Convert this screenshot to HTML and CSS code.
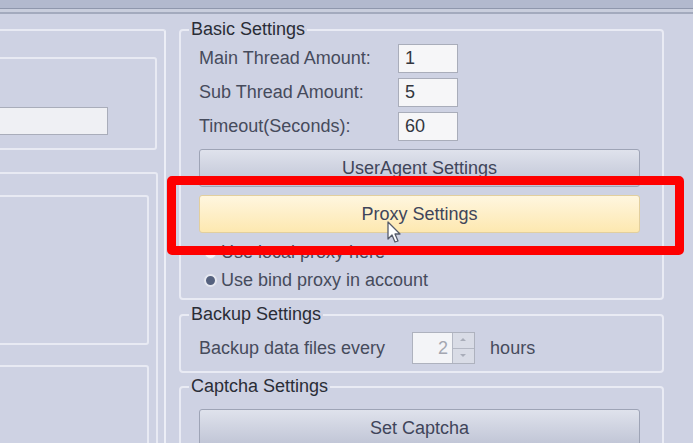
FILE: index.html
```html
<!DOCTYPE html>
<html lang="en">
<head>
    <meta charset="UTF-8">
    <title>Settings</title>
    <link rel="stylesheet" href="styles.css">
</head>
<body>
    <div class="titlebar"></div>
    <div class="titlebar-rule"></div>

    <div class="main">
        <div class="left-col">
            <div class="panel outer">
                <div class="panel box-a">
                    <div class="text-field"></div>
                </div>
                <div class="panel box-b">
                    <div class="panel box-c"></div>
                    <div class="panel box-d"></div>
                </div>
            </div>
        </div>

        <div class="right-col">
            <fieldset class="group basic">
                <legend>Basic Settings</legend>
                <div class="row">
                    <label for="main_thread">Main Thread Amount:</label>
                    <input type="text" id="main_thread" value="1">
                </div>
                <div class="row">
                    <label for="sub_thread">Sub Thread Amount:</label>
                    <input type="text" id="sub_thread" value="5">
                </div>
                <div class="row">
                    <label for="timeout">Timeout(Seconds):</label>
                    <input type="text" id="timeout" value="60">
                </div>
                <button class="btn ua-btn">UserAgent Settings</button>
                <button class="btn btn-hot">Proxy Settings</button>
                <div class="radio"><span class="dot"></span>Use local proxy here</div>
                <div class="radio checked"><span class="dot"></span>Use bind proxy in account</div>
            </fieldset>

            <fieldset class="group backup">
                <legend>Backup Settings</legend>
                <div class="backup-row">
                    <span>Backup data files every</span>
                    <div class="spinner">
                        <div class="spin-value">2</div>
                        <div class="spin-arrows">
                            <div class="spin-up"></div>
                            <div class="spin-down"></div>
                        </div>
                    </div>
                    <span>hours</span>
                </div>
            </fieldset>

            <fieldset class="group captcha">
                <legend>Captcha Settings</legend>
                <button class="btn">Set Captcha</button>
            </fieldset>
        </div>
    </div>

    <div class="highlight"></div>
    <svg class="cursor" width="16" height="24" viewBox="0 0 16 24">
        <path d="M1 1 L1 18 L5 14 L8 21 L11 20 L8 13 L13 13 Z" fill="#fff" stroke="#555b6a" stroke-width="1.3" stroke-linejoin="round"/>
    </svg>
</body>
</html>
```

FILE: styles.css
```css
body {
    margin: 0;
    height: 443px;
    overflow: hidden;
    background-color: #ced2e3;
    font-family: "Liberation Sans", Arial, sans-serif;
    font-size: 18px;
    color: #464b5c;
}

.titlebar {
    height: 8px;
    background-color: #b2b9ce;
    border-bottom: 1px solid #8f97ad;
}

.titlebar-rule {
    height: 3px;
    background-color: #c9cedd;
    border-bottom: 2px solid #a3aabd;
}

.main {
    display: flex;
    padding-top: 5px;
}

/* left side, cut off by the window edge */
.left-col {
    width: 166px;
    flex-shrink: 0;
}

.panel {
    border: 2px solid #e8eaf3;
    border-radius: 3px;
}

.outer {
    margin-left: -20px;
    margin-top: 10px;
    height: 420px;
    border-right-color: #eceef6;
}

.box-a {
    margin-top: 26px;
    margin-right: 7px;
    height: 89px;
    margin-left: -4px;
}

.text-field {
    margin-top: 48px;
    width: 126px;
    height: 26px;
    background-color: #eff0f4;
    border: 1px solid #a9adba;
}

.box-b {
    margin-top: 22px;
    margin-right: 6px;
    margin-left: -4px;
    height: 300px;
}

.box-c {
    margin-top: 21px;
    margin-right: 7px;
    margin-left: -4px;
    height: 146px;
}

.box-d {
    margin-top: 20px;
    margin-right: 7px;
    margin-left: -4px;
    height: 120px;
}

/* right side settings */
.right-col {
    margin-left: 13px;
    width: 485px;
    display: flex;
    flex-direction: column;
}

.group {
    margin: 0;
    padding: 4px 22px 3px 18px;
    border: 2px solid #e9ebf4;
    border-radius: 4px;
    min-width: 0;
}

.group legend {
    margin-left: -10px;
    padding: 0 2px;
    line-height: 21px;
    color: #2a2d36;
}

.basic {
    padding-bottom: 4px;
}

.row {
    display: grid;
    grid-template-columns: 199px 60px;
    align-items: center;
    margin-bottom: 5px;
}

.row input {
    box-sizing: border-box;
    width: 60px;
    height: 29px;
    padding: 0 6px;
    border: 1px solid #a9adba;
    background-color: #f6f6f8;
    font-family: inherit;
    font-size: 18px;
    color: #33363f;
}

.btn {
    display: block;
    width: 100%;
    height: 38px;
    border: 1px solid #9ea4b6;
    border-radius: 3px;
    background: linear-gradient(#dfe2ec, #bfc4d5);
    font-family: inherit;
    font-size: 18px;
    color: #40455a;
}

.ua-btn {
    margin-top: 8px;
}

.btn-hot {
    margin-top: 8px;
    margin-bottom: 5px;
    border-color: #e2cf9e;
    background: linear-gradient(#fff6df, #fde8b0);
}

.radio {
    display: flex;
    align-items: center;
    height: 28px;
    padding-left: 5px;
}

.dot {
    box-sizing: border-box;
    width: 13px;
    height: 13px;
    margin-right: 4px;
    border-radius: 50%;
    border: 1px solid #d8dbe6;
    background-color: #f3f4f8;
}

.checked .dot {
    border: 2px solid #e6e8f0;
    background-color: #55617e;
}

.backup {
    margin-top: 4px;
    padding-top: 7px;
    padding-bottom: 7px;
}

.backup-row {
    display: flex;
    align-items: center;
}

.spinner {
    display: flex;
    height: 30px;
    margin-left: 27px;
    margin-right: 15px;
    border: 1px solid #aeb2be;
}

.spin-value {
    width: 35px;
    padding-right: 4px;
    background-color: #f3f4f7;
    color: #a4a7b1;
    text-align: right;
    line-height: 30px;
}

.spin-arrows {
    width: 21px;
    display: flex;
    flex-direction: column;
    border-left: 1px solid #b4b8c4;
}

.spin-up, .spin-down {
    flex: 1;
    background-color: #d9dce6;
    position: relative;
}

.spin-up {
    border-bottom: 1px solid #b4b8c4;
}

.spin-up::after, .spin-down::after {
    content: "";
    position: absolute;
    left: 7px;
    top: 5px;
    border-left: 3px solid transparent;
    border-right: 3px solid transparent;
}

.spin-up::after {
    border-bottom: 3px solid #a9adb9;
}

.spin-down::after {
    border-top: 3px solid #a9adb9;
}

.captcha {
    margin-top: 3px;
    padding-top: 12px;
}

/* red marker drawn over the screenshot */
.highlight {
    position: absolute;
    left: 167px;
    top: 176px;
    width: 499px;
    height: 61px;
    border: 9px solid #fe0000;
    border-radius: 5px;
}

.cursor {
    position: absolute;
    left: 387px;
    top: 221px;
}
```
